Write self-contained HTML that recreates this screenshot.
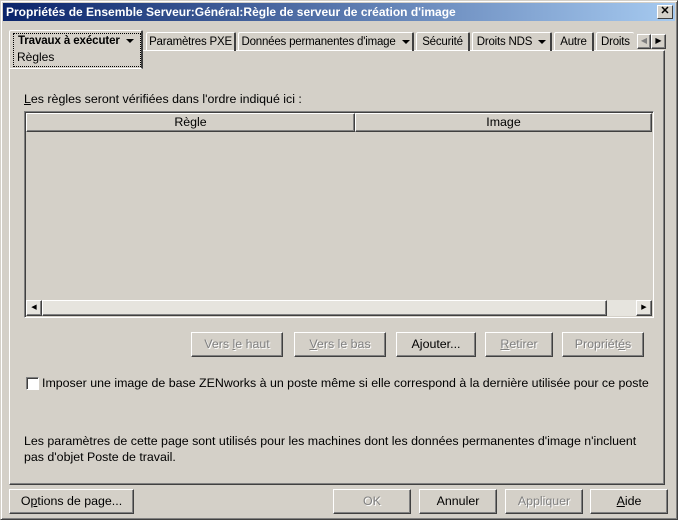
<!DOCTYPE html>
<html><head><meta charset="utf-8"><style>
*{box-sizing:border-box;margin:0;padding:0}
body{width:678px;height:520px;background:#d4d0c8;font-family:"Liberation Sans",Arial,sans-serif;font-size:12.4px;color:#000;position:relative;overflow:hidden}
.a{position:absolute;white-space:nowrap}
.win{position:absolute;left:0;top:0;width:678px;height:520px;border:1px solid;border-color:#d4d0c8 #404040 #404040 #d4d0c8;box-shadow:inset 1px 1px #fff,inset -1px -1px #808080}
.title{left:3px;top:3px;width:672px;height:18px;background:linear-gradient(90deg,#0a246a,#a6caf0);color:#fff;font-weight:bold;font-size:12px;line-height:18px;padding-left:3px}
.x{right:5px;top:5px;width:16px;height:14px;background:#d4d0c8;border:1px solid;border-color:#fff #404040 #404040 #fff;font-size:11px;line-height:11px;text-align:center;font-weight:bold;color:#000}
.raised{border:1px solid;border-color:#fff #404040 #404040 #fff;box-shadow:inset -1px -1px #808080}
.sunk{border:1px solid;border-color:#808080 #fff #fff #808080;box-shadow:inset 1px 1px #404040}
.tab{position:absolute;top:32px;height:19px;border-left:1px solid #fff;border-top:1px solid #fff;border-right:2px solid #404040;border-radius:2px 2px 0 0;padding:2px 0 0 0;line-height:14px;text-align:center;overflow:hidden;white-space:nowrap;font-size:11.5px;letter-spacing:-0.2px}
.btn{position:absolute;height:25px;text-align:center;line-height:22px;white-space:nowrap}
.dis{color:#808080;text-shadow:1px 1px #fff}
.tri{display:inline-block;width:0;height:0;border-left:4px solid transparent;border-right:4px solid transparent;border-top:4px solid #000;vertical-align:middle;margin-left:6px}
</style></head><body>
<div class="win"></div>
<div class="a title">Propriétés de Ensemble Serveur:Général:Règle de serveur de création d'image</div>
<div class="a x">✕</div>
<div class="a" style="left:9px;top:50px;width:656px;height:435px;border-left:1px solid #fff;border-top:1px solid #fff;border-right:1px solid #404040;border-bottom:1px solid #404040;box-shadow:inset -1px -1px #808080"></div>
<div class="tab" style="left:146px;width:90px">Paramètres PXE</div>
<div class="tab" style="left:238px;width:176px">Données permanentes d'image<span class="tri"></span></div>
<div class="tab" style="left:416px;width:54px">Sécurité</div>
<div class="tab" style="left:472px;width:80px">Droits NDS<span class="tri"></span></div>
<div class="tab" style="left:554px;width:40px">Autre</div>
<div class="tab" style="left:596px;width:38px;border-right:none;text-align:left;padding-left:4px">Droits</div>
<div class="a" style="left:9px;top:30px;width:134px;height:39px;background:#d4d0c8;border-left:1px solid #fff;border-top:1px solid #fff;border-right:2px solid #404040;border-bottom:1px solid #fff;border-radius:2px 2px 0 0"></div>
<div class="a" style="left:13px;top:33px;width:128px;height:34px;border:1px dotted #000"></div>
<div class="a" style="left:18px;top:35px;font-weight:bold;font-size:11.5px;letter-spacing:-0.1px">Travaux à exécuter<span class="tri"></span></div>
<div class="a" style="left:17px;top:50px;font-size:12px">Règles</div>
<div class="a raised" style="left:637px;top:34px;width:14px;height:15px;font-size:8px;line-height:12px;text-align:center;color:#808080">◀</div>
<div class="a raised" style="left:651px;top:34px;width:15px;height:15px;font-size:8px;line-height:12px;text-align:center">▶</div>
<div class="a" style="left:24px;top:92px"><u>L</u>es règles seront vérifiées dans l'ordre indiqué ici :</div>
<div class="a sunk" style="left:24px;top:111px;width:630px;height:207px"></div>
<div class="a raised" style="left:26px;top:113px;width:329px;height:19px;text-align:center;line-height:17px">Règle</div>
<div class="a raised" style="left:355px;top:113px;width:297px;height:19px;text-align:center;line-height:17px">Image</div>
<div class="a" style="left:26px;top:300px;width:626px;height:16px;background:#e6e4de"></div>
<div class="a raised" style="left:26px;top:300px;width:16px;height:16px;font-size:7px;line-height:14px;text-align:center">◀</div>
<div class="a raised" style="left:42px;top:300px;width:565px;height:16px"></div>
<div class="a raised" style="left:636px;top:300px;width:16px;height:16px;font-size:7px;line-height:14px;text-align:center">▶</div>
<div class="btn raised dis" style="left:191px;top:332px;width:92px">Vers <u>l</u>e haut</div>
<div class="btn raised dis" style="left:294px;top:332px;width:92px"><u>V</u>ers le bas</div>
<div class="btn raised" style="left:396px;top:332px;width:80px">A<u>j</u>outer...</div>
<div class="btn raised dis" style="left:485px;top:332px;width:68px"><u>R</u>etirer</div>
<div class="btn raised dis" style="left:562px;top:332px;width:82px">Propriét<u>é</u>s</div>
<div class="a sunk" style="left:26px;top:377px;width:13px;height:13px;background:#fff"></div>
<div class="a" style="left:42px;top:376px">Imposer une image de base ZENworks à un poste même si elle correspond à la dernière utilisée pour ce poste</div>
<div class="a" style="left:24px;top:433px;line-height:16px">Les paramètres de cette page sont utilisés pour les machines dont les données permanentes d'image n'incluent</div>
<div class="a" style="left:24px;top:449px;line-height:16px">pas d'objet Poste de travail.</div>
<div class="btn raised" style="left:9px;top:489px;width:125px">O<u>p</u>tions de page...</div>
<div class="btn raised dis" style="left:333px;top:489px;width:78px">OK</div>
<div class="btn raised" style="left:419px;top:489px;width:78px">Annuler</div>
<div class="btn raised dis" style="left:505px;top:489px;width:78px">Appliquer</div>
<div class="btn raised" style="left:590px;top:489px;width:78px"><u>A</u>ide</div>
</body></html>
